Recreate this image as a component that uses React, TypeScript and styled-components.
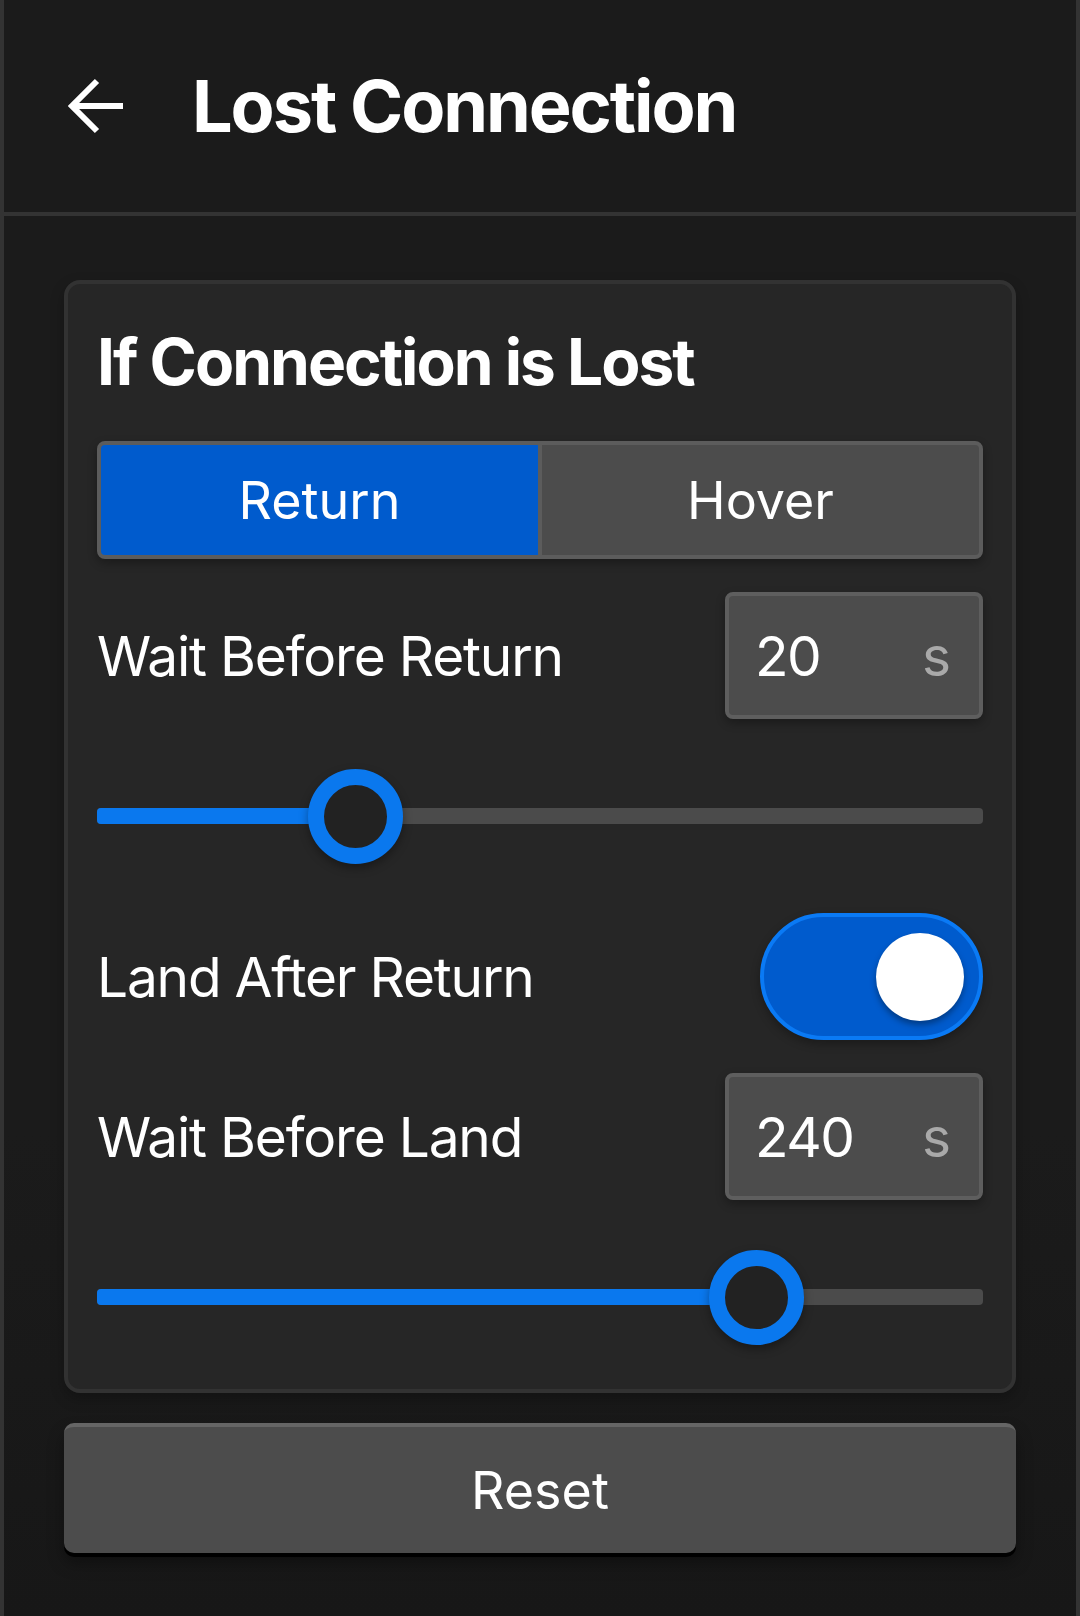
import React, { useState } from "react";
import styled, { createGlobalStyle } from "styled-components";

const GlobalStyle = createGlobalStyle`
  html, body {
    margin: 0;
    padding: 0;
    background: #1b1b1b;
  }
  * {
    box-sizing: border-box;
  }
  body {
    font-family: Inter, "Noto Sans", "Liberation Sans", sans-serif;
    color: #ffffff;
  }
`;

const Page = styled.div`
  width: 1080px;
  min-height: 1616px;
  background: linear-gradient(#1b1b1b 70%, #171717);
  border-left: 4px solid #333333;
  border-right: 4px solid #333333;
  display: flex;
  flex-direction: column;
`;

const Header = styled.header`
  height: 216px;
  display: flex;
  align-items: center;
  gap: 66px;
  padding: 0 0 0 62px;
  border-bottom: 4px solid #333333;
`;

const BackButton = styled.button`
  width: 60px;
  height: 60px;
  padding: 0;
  border: none;
  background: none;
  color: #ffffff;
  display: flex;
  cursor: pointer;
`;

const Title = styled.h1`
  margin: 0;
  font-size: 72px;
  font-weight: 700;
  letter-spacing: -2.1px;
  line-height: 1;
`;

const Content = styled.main`
  padding: 64px 60px 0 60px;
  display: flex;
  flex-direction: column;
  gap: 30px;
`;

const Card = styled.section`
  background: #262626;
  border: 4px solid #323232;
  border-radius: 16px;
  padding: 36px 29px 28px;
  display: flex;
  flex-direction: column;
  gap: 33px;
  box-shadow: 0 6px 14px rgba(0, 0, 0, 0.25);
`;

const CardTitle = styled.h2`
  margin: 0 0 4px;
  height: 84px;
  line-height: 84px;
  font-size: 64px;
  font-weight: 700;
  letter-spacing: -2px;
`;

const Segmented = styled.div`
  height: 118px;
  display: grid;
  grid-template-columns: 1fr 1fr;
  gap: 4px;
  background: #5c5c5c;
  border: 4px solid #5c5c5c;
  border-radius: 8px;
  overflow: hidden;
  box-shadow: 0 4px 10px rgba(0, 0, 0, 0.3);
`;

const Segment = styled.button<{ $active: boolean }>`
  border: none;
  background: ${(p) => (p.$active ? "#005bcd" : "#4c4c4c")};
  color: #ffffff;
  font-family: inherit;
  font-size: 52px;
  font-weight: 400;
  letter-spacing: 0;
  cursor: pointer;
`;

const Row = styled.div`
  height: 127px;
  display: flex;
  align-items: center;
  justify-content: space-between;
`;

const Label = styled.span`
  font-size: 55px;
  letter-spacing: -1.2px;
`;

const NumberBox = styled.div`
  width: 258px;
  height: 127px;
  background: #4c4c4c;
  border: 4px solid #5e5e5e;
  border-radius: 8px;
  padding: 0 28px 0 26px;
  display: flex;
  align-items: center;
  justify-content: space-between;
  box-shadow: 0 4px 10px rgba(0, 0, 0, 0.3);
`;

const NumberValue = styled.span`
  font-size: 55px;
  letter-spacing: -1.5px;
`;

const Unit = styled.span`
  font-size: 55px;
  color: #a9a9a9;
`;

const SliderBlock = styled.div`
  height: 128px;
  display: flex;
  align-items: center;
`;

const Track = styled.div`
  position: relative;
  width: 100%;
  height: 16px;
  border-radius: 4px;
  background: #4b4b4b;
`;

const Fill = styled.div`
  height: 100%;
  border-radius: 4px 0 0 4px;
  background: #0a78ee;
`;

const Thumb = styled.div`
  position: absolute;
  top: 50%;
  width: 95px;
  height: 95px;
  margin: -47.5px 0 0 -47.5px;
  border-radius: 50%;
  border: 16px solid #0a78ee;
  background: #222222;
  box-shadow: 0 4px 10px rgba(0, 0, 0, 0.35);
`;

const Toggle = styled.button<{ $on: boolean }>`
  width: 223px;
  height: 127px;
  padding: 0 15px;
  border-radius: 64px;
  border: 4px solid ${(p) => (p.$on ? "#0a7af5" : "#5e5e5e")};
  background: ${(p) => (p.$on ? "#005bcd" : "#4c4c4c")};
  display: flex;
  align-items: center;
  justify-content: ${(p) => (p.$on ? "flex-end" : "flex-start")};
  cursor: pointer;
  box-shadow: 0 4px 10px rgba(0, 0, 0, 0.3);
`;

const Knob = styled.span`
  width: 88px;
  height: 88px;
  border-radius: 50%;
  background: #ffffff;
  box-shadow: 0 4px 6px rgba(0, 0, 0, 0.35);
`;

const ResetButton = styled.button`
  height: 130px;
  border: none;
  border-top: 4px solid #656565;
  border-radius: 10px;
  background: #4c4c4c;
  color: #ffffff;
  font-family: inherit;
  font-size: 52px;
  letter-spacing: 0;
  cursor: pointer;
  box-shadow: 0 4px 0 #000000, 0 10px 16px rgba(0, 0, 0, 0.35);
`;

const ArrowIcon = () => (
  <svg width="60" height="60" viewBox="0 0 60 60" fill="none">
    <path
      d="M57 30H6M31 5L6 30L31 55"
      stroke="currentColor"
      strokeWidth="6"
      strokeLinejoin="miter"
    />
  </svg>
);

const Slider = ({ fraction }: { fraction: number }) => (
  <SliderBlock>
    <Track>
      <Fill style={{ width: `${fraction * 100}%` }} />
      <Thumb style={{ left: `${fraction * 100}%` }} />
    </Track>
  </SliderBlock>
);

const NumberField = ({ value, unit }: { value: number; unit: string }) => (
  <NumberBox>
    <NumberValue>{value}</NumberValue>
    <Unit>{unit}</Unit>
  </NumberBox>
);

export default function App() {
  const [mode, setMode] = useState<"return" | "hover">("return");
  const [land, setLand] = useState(true);

  return (
    <>
      <GlobalStyle />
      <Page>
        <Header>
          <BackButton aria-label="Back">
            <ArrowIcon />
          </BackButton>
          <Title>Lost Connection</Title>
        </Header>
        <Content>
          <Card>
            <CardTitle>If Connection is Lost</CardTitle>
            <Segmented>
              <Segment $active={mode === "return"} onClick={() => setMode("return")}>
                Return
              </Segment>
              <Segment $active={mode === "hover"} onClick={() => setMode("hover")}>
                Hover
              </Segment>
            </Segmented>
            <Row>
              <Label>Wait Before Return</Label>
              <NumberField value={20} unit="s" />
            </Row>
            <Slider fraction={0.292} />
            <Row>
              <Label>Land After Return</Label>
              <Toggle $on={land} onClick={() => setLand(!land)}>
                <Knob />
              </Toggle>
            </Row>
            <Row>
              <Label>Wait Before Land</Label>
              <NumberField value={240} unit="s" />
            </Row>
            <Slider fraction={0.744} />
          </Card>
          <ResetButton>Reset</ResetButton>
        </Content>
      </Page>
    </>
  );
}
